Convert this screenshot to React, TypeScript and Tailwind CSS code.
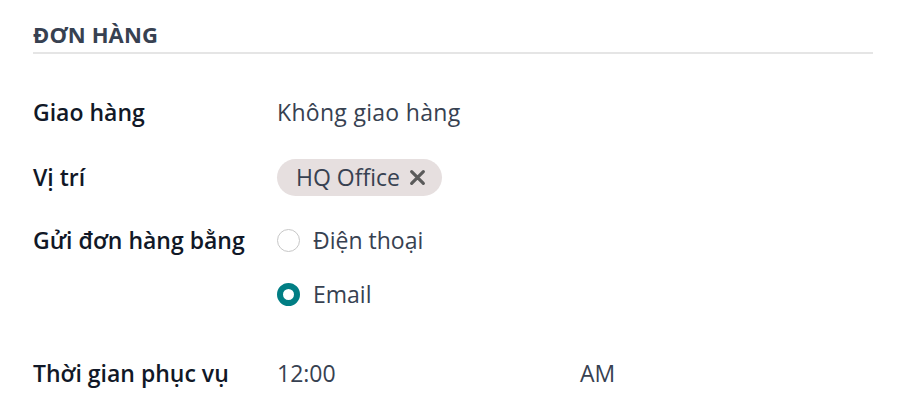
import React from "react";

export default function App() {
  return (
    <div className="w-[908px] h-[418px] bg-white overflow-hidden" style={{ fontFamily: '"Open Sans", "Noto Sans", sans-serif' }}>
      <div className="pl-[33px] pr-[35px] pt-[19px]">
        <div className="border-b-2 border-[#e5e5e5] pb-[3px]">
          <h2 className="text-[22px] font-bold text-[#374151] leading-[30px] tracking-[0.15px]">ĐƠN HÀNG</h2>
        </div>
        <div className="mt-[40px] flex flex-col">
          <div className="flex items-center h-[36px]">
            <div className="w-[244px] text-[23px] font-semibold text-[#111827]">Giao hàng</div>
            <div className="text-[23px] text-[#374151] tracking-[0.3px]">Không giao hàng</div>
          </div>
          <div className="flex items-center h-[38px] mt-[28px]">
            <div className="w-[244px] text-[23px] font-semibold text-[#111827]">Vị trí</div>
            <div className="flex items-center h-[37px] rounded-full bg-[#e6dfdf] pl-[19px] pr-[16px] text-[23px] text-[#374151]">
              HQ Office
              <svg className="ml-[9px]" width="17" height="17" viewBox="0 0 16 16">
                <path d="M2.5 2.5 L13.5 13.5 M13.5 2.5 L2.5 13.5" stroke="#5a5a5a" strokeWidth="3" strokeLinecap="round" />
              </svg>
            </div>
          </div>
          <div className="flex mt-[26px]">
            <div className="w-[244px] text-[23px] font-semibold text-[#111827] h-[36px] flex items-center">Gửi đơn hàng bằng</div>
            <div className="flex flex-col gap-[18px]">
              <label className="flex items-center h-[36px]">
                <span className="w-[23px] h-[23px] rounded-full border border-[#c7c7c7] bg-white" />
                <span className="ml-[13px] text-[23px] text-[#374151]">Điện thoại</span>
              </label>
              <label className="flex items-center h-[36px]">
                <span className="w-[23px] h-[23px] rounded-full border-[6px] border-[#017e84] bg-white" />
                <span className="ml-[13px] text-[23px] text-[#374151]">Email</span>
              </label>
            </div>
          </div>
          <div className="flex items-center h-[36px] mt-[43px]">
            <div className="w-[244px] text-[23px] font-semibold text-[#111827]">Thời gian phục vụ</div>
            <div className="w-[303px] text-[23px] text-[#374151]">12:00</div>
            <div className="text-[23px] text-[#374151]">AM</div>
          </div>
        </div>
      </div>
    </div>
  );
}
